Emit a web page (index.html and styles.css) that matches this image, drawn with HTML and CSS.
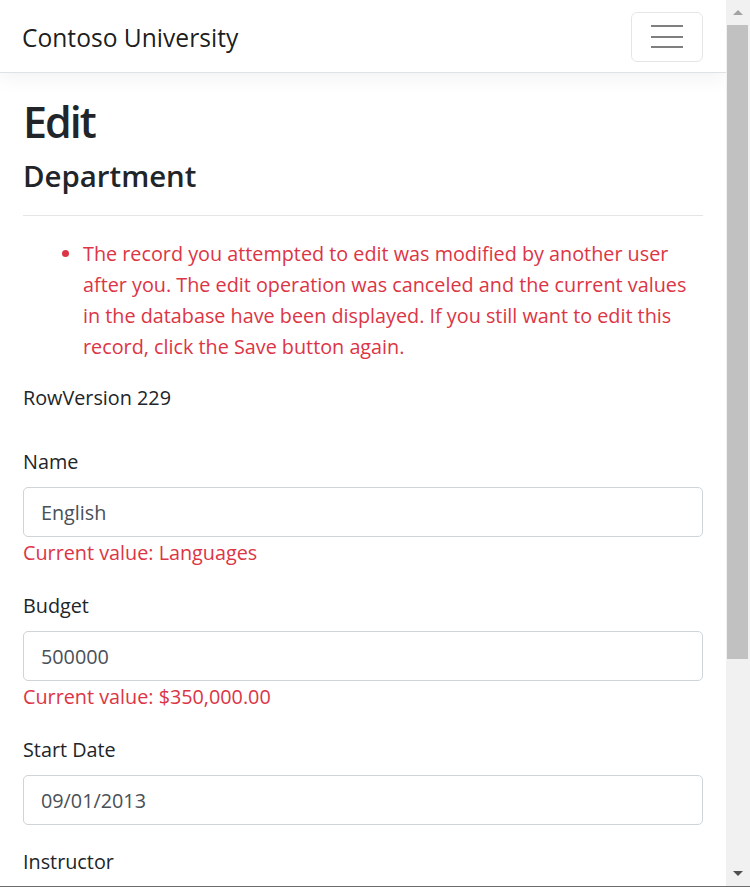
FILE: index.html
```html
<!DOCTYPE html>
<html lang="en">
<head>
<meta charset="utf-8">
<title>Edit - Contoso University</title>
<link rel="stylesheet" href="styles.css">
</head>
<body>
<div class="window">
  <div class="viewport">
    <header class="navbar">
      <a class="brand" href="#">Contoso University</a>
      <button class="toggler" type="button" aria-label="Toggle navigation">
        <span class="bar"></span><span class="bar"></span><span class="bar"></span>
      </button>
    </header>
    <main class="container">
      <h1 class="title">Edit</h1>
      <h4 class="subtitle">Department</h4>
      <hr class="rule">
      <ul class="errors">
        <li>The record you attempted to edit was modified by another user<br>after you. The edit operation was canceled and the current values<br>in the database have been displayed. If you still want to edit this<br>record, click the Save button again.</li>
      </ul>
      <div class="rowversion">RowVersion 229</div>
      <div class="form-group">
        <label class="label">Name</label>
        <input class="control" type="text" value="English">
        <span class="current">Current value: Languages</span>
      </div>
      <div class="form-group">
        <label class="label">Budget</label>
        <input class="control" type="text" value="500000">
        <span class="current">Current value: $350,000.00</span>
      </div>
      <div class="form-group">
        <label class="label">Start Date</label>
        <input class="control" type="text" value="09/01/2013">
      </div>
      <div class="form-group">
        <label class="label">Instructor</label>
        <input class="control" type="text" value="Abercrombie, Kim">
      </div>
    </main>
  </div>
  <div class="scrollbar">
    <div class="arrow up"></div>
    <div class="track"><div class="thumb"></div></div>
    <div class="arrow down"></div>
  </div>
</div>
<div class="frame-bottom"></div>
</body>
</html>
```

FILE: styles.css
```css
* { box-sizing: border-box; }

html, body {
  margin: 0;
  padding: 0;
  background: #fff;
}

body {
  font-family: "Open Sans", "Noto Sans", sans-serif;
  font-size: 19.8px;
  line-height: 31px;
  color: #212529;
  width: 750px;
  height: 887px;
  overflow: hidden;
}

.window {
  display: flex;
  height: 886px;
}

.viewport {
  flex: 1;
  height: 886px;
  overflow: hidden;
}

.frame-bottom {
  height: 1px;
  background: #6d6d6d;
}

/* navbar */
.navbar {
  height: 73px;
  display: flex;
  align-items: center;
  justify-content: space-between;
  padding: 1px 23px 0 22px;
  border-bottom: 1px solid #dee2e6;
  box-shadow: 0 6px 18px rgba(0, 0, 0, .05);
  background: #fff;
}

.brand {
  font-size: 24.6px;
  color: rgba(0, 0, 0, .9);
  text-decoration: none;
  line-height: 36px;
  padding-top: 2px;
}

.toggler {
  width: 72px;
  height: 50px;
  border: 1.5px solid rgba(0, 0, 0, .1);
  border-radius: 6px;
  background: transparent;
  display: flex;
  flex-direction: column;
  align-items: center;
  justify-content: center;
  gap: 8.5px;
  padding: 0;
}

.toggler .bar {
  display: block;
  width: 32px;
  height: 2px;
  background: rgba(0, 0, 0, .5);
}

/* content */
.container {
  padding: 0 23px;
}

.title {
  margin: 21.5px 0 10.5px;
  font-size: 43px;
  line-height: 54px;
  font-weight: 600;
  letter-spacing: -2px;
}

.subtitle {
  margin: 0;
  font-size: 29.4px;
  line-height: 35px;
  font-weight: 600;
}

.rule {
  margin: 21px 0 22px;
  border: 0;
  border-top: 1px solid rgba(0, 0, 0, .1);
}

.errors {
  margin: 0 0 20px;
  padding-left: 60px;
  color: #dc3545;
  white-space: nowrap;
}

.rowversion {
  margin-bottom: 33px;
}

.form-group {
  margin-bottom: 21px;
}

.label {
  display: block;
  margin-bottom: 10px;
}

.control {
  display: block;
  width: 100%;
  height: 50px;
  padding: 0 17px;
  border: 1px solid #ced4da;
  border-radius: 5px;
  font-family: inherit;
  font-size: 19.8px;
  color: #495057;
  background: #fff;
}

.current {
  display: block;
  color: #dc3545;
  line-height: 32px;
}

/* scrollbar */
.scrollbar {
  width: 24px;
  height: 886px;
  background: #f1f1f1;
  display: flex;
  flex-direction: column;
}

.arrow {
  height: 25px;
  display: flex;
  align-items: center;
  justify-content: center;
}

.arrow.up::before {
  content: "";
  border-left: 5px solid transparent;
  border-right: 5px solid transparent;
  border-bottom: 5px solid #a3a3a3;
}

.arrow.down::before {
  content: "";
  border-left: 5px solid transparent;
  border-right: 5px solid transparent;
  border-top: 5px solid #505050;
}

.track {
  flex: 1;
  padding: 0 2px 0 1px;
}

.thumb {
  height: 634px;
  background: #c1c1c1;
}
```
